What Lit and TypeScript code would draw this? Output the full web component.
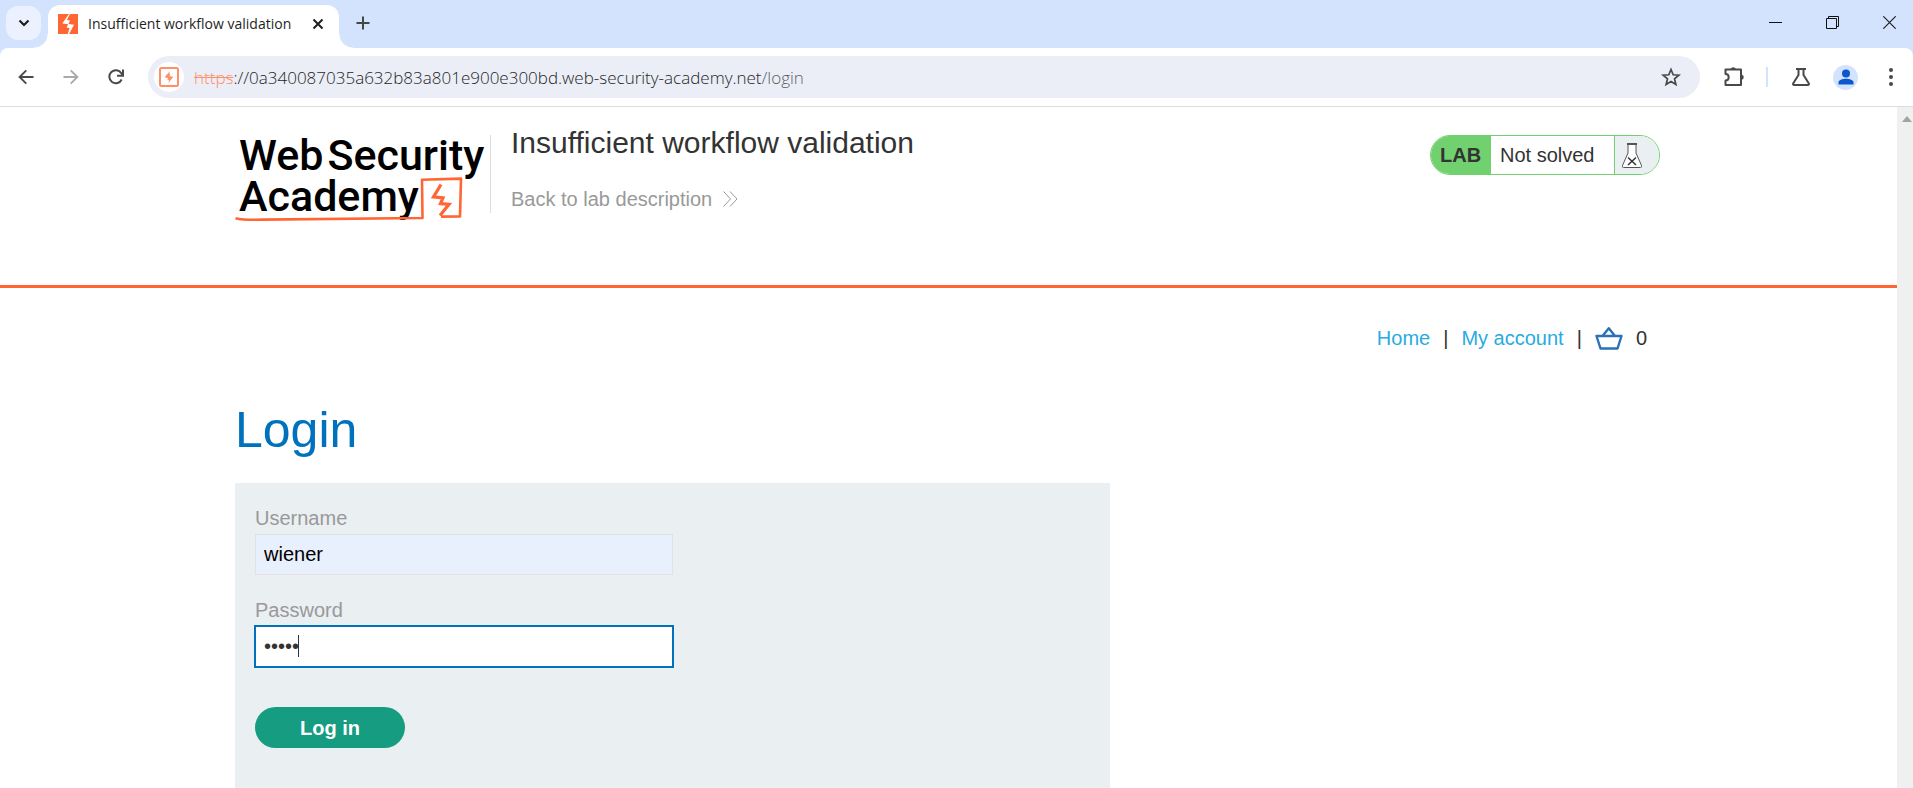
import { LitElement, html, css, svg } from "lit";
import { customElement, state } from "lit/decorators.js";

const icon = (w: number, h: number, body: unknown) =>
  html`<svg width=${w} height=${h} viewBox="0 0 ${w} ${h}" fill="none" aria-hidden="true">${body}</svg>`;

@customElement("browser-chrome")
class BrowserChrome extends LitElement {
  static styles = css`
    :host { display: block; font-family: "Open Sans", "Noto Sans", sans-serif; color: #1f1f1f; }
    svg { display: block; }
    button { border: 0; padding: 0; background: none; display: grid; place-items: center; color: inherit; font: inherit; }
    .strip { display: flex; height: 48px; background: #d3e2fd; align-items: flex-start; }
    .search { width: 35px; height: 34px; margin: 6px 7px 0 6px; border-radius: 12px; background: #ebf1fe; }
    .tab { position: relative; display: flex; align-items: center; gap: 10px; box-sizing: border-box; width: 291px; height: 43px; margin-top: 5px; padding: 0 13px 6px 10px; background: #fff; border-radius: 12px 12px 0 0; }
    .tab::before, .tab::after { content: ""; position: absolute; bottom: 0; width: 14px; height: 14px; }
    .tab::before { left: -14px; background: radial-gradient(circle at 0 0, transparent 13px, #fff 14px); }
    .tab::after { right: -14px; background: radial-gradient(circle at 100% 0, transparent 13px, #fff 14px); }
    .title { flex: 1; font-size: 14px; line-height: 20px; white-space: nowrap; }
    .close { width: 16px; height: 20px; }
    .new { width: 35px; height: 36px; margin: 5px 0 0 6px; }
    .window { display: flex; gap: 10px; margin-left: auto; }
    .window button { width: 47px; height: 45px; }
    .bar { display: flex; align-items: center; height: 58px; background: #fff; border-bottom: 1px solid #dcdde0; border-radius: 8px 8px 0 0; box-sizing: content-box; }
    .barwrap { background: #d3e2fd; }
    .nav { display: flex; padding: 0 8px 0 3px; }
    .nav button { width: 45px; height: 40px; }
    .omni { flex: 1; display: flex; align-items: center; height: 42px; margin-left: 2px; border-radius: 21px; background: #ebeef7; padding: 0 19px 0 6px; }
    .site { width: 30px; height: 30px; border-radius: 50%; background: #fff; }
    .url { flex: 1; margin-left: 10px; padding-top: 1px; font-size: 17px; font-weight: 300; line-height: 24px; white-space: nowrap; }
    .scheme { color: #ff8f66; text-decoration: line-through; }
    .path { color: #5a5d66; }
    .tools { display: flex; align-items: center; width: 213px; }
    .tools button { width: 45px; height: 40px; }
    .tools .first { margin: 0 10px 0 11px; }
    .rule { width: 2px; height: 20px; background: #d3e2fd; margin-right: 10px; }
    .avatar { width: 25px; height: 25px; border-radius: 50%; background: #d3e2fd; display: grid; place-items: center; }
  `;

  render() {
    return html`
      <div class="strip">
        <button class="search" aria-label="Search tabs">${icon(12, 8, svg`<path d="M1.5 1.5 6 6l4.500-4.500" stroke="#1f1f1f" stroke-width="2.200"/>`)}</button>
        <div class="tab">
          ${icon(20, 20, svg`<path fill="#ff6633" d="M0 0h20v20H0z"/><path fill="#fff" d="M11 0 4.200 9.400l6 .8L8.600 13.600l3 .4-1.800 6h1.300L16 10.800l-5.500-.8 1.500-3.400-3.200-.5L12 0z"/>`)}
          <span class="title">Insufficient workflow validation</span>
          <button class="close" aria-label="Close tab">${icon(12, 12, svg`<path d="m1.500 1.500 9 9m0-9-9 9" stroke="#1f1f1f" stroke-width="2"/>`)}</button>
        </div>
        <button class="new" aria-label="New tab">${icon(14, 14, svg`<path d="M7 .5v13M.5 7h13" stroke="#444746" stroke-width="2"/>`)}</button>
        <div class="window">
          <button aria-label="Minimize">${icon(13, 13, svg`<path d="M0 6.500h13" stroke="#111"/>`)}</button>
          <button aria-label="Restore">${icon(13, 13, svg`<path d="M.5 2.500h10v10H.5zM2.500 2.500v-2h10v10h-2" stroke="#111"/>`)}</button>
          <button aria-label="Close">${icon(13, 13, svg`<path d="m.3.3 12.400 12.400m0-12.400L.3 12.700" stroke="#222" stroke-width="1.200"/>`)}</button>
        </div>
      </div>
      <div class="barwrap">
      <div class="bar">
        <div class="nav">
          <button aria-label="Back">${icon(16, 16, svg`<path d="M15.500 8H2M8.300 1.300 1.600 8l6.700 6.700" stroke="#47494b" stroke-width="1.900"/>`)}</button>
          <button aria-label="Forward">${icon(16, 16, svg`<path d="M.5 8H14M7.700 1.300 14.400 8l-6.700 6.700" stroke="#aaa" stroke-width="1.900"/>`)}</button>
          <button aria-label="Reload">${icon(16, 16, svg`<path d="M13.700 10.500A6.500 6.500 0 1 1 13.300 4.200L14.600 6" stroke="#47494b" stroke-width="2"/><path d="M15 .5v6.200H9" stroke="#47494b" stroke-width="2"/>`)}</button>
        </div>
        <div class="omni">
          <button class="site" aria-label="Site information">${icon(20, 20, svg`<rect x="1" y="1" width="18" height="18" rx="1.500" stroke="#ff8f66" stroke-width="2"/><path fill="#ff8f66" d="m11 4-5.500 6.300 3.700.6L8.200 12.600l1.800.4-.6 3 5-6.200-3.900-.5 1-1.800-1.300-.4z"/>`)}</button>
          <span class="url"><span class="scheme">https</span>://0a340087035a632b83a801e900e300bd.web-security-academy.net<span class="path">/login</span></span>
          <button aria-label="Bookmark this page">${icon(20, 20, svg`<path d="m10 2.500 2.200 5.300 5.700.4-4.400 3.700 1.400 5.600-4.900-3-4.900 3 1.400-5.600-4.400-3.700 5.700-.4z" stroke="#47494b" stroke-width="1.700"/>`)}</button>
        </div>
        <div class="tools">
          <button class="first" aria-label="Extensions">${icon(22, 24, svg`<path d="M2.500 4.500h15.500v15.500H2.500v-4.500c2 0 3.200-1.400 3.200-3.200S4.500 9 2.500 9z" stroke="#47494b" stroke-width="2" stroke-linejoin="round"/><path d="M7.500 4a3 3 0 0 1 5.500 0zM18.500 9.500a2.800 2.800 0 0 1 0 5.500z" fill="#47494b"/>`)}</button>
          <span class="rule"></span>
          <button aria-label="Labs">${icon(18, 18, svg`<path d="M4 1h10M6.500 1v6L1.300 15.200q-.8 1.800 1 1.800h13.400q1.800 0 1-1.800L11.500 7V1" stroke="#47494b" stroke-width="2"/>`)}</button>
          <button aria-label="Profile"><span class="avatar">${icon(16, 16, svg`<circle cx="8" cy="4.500" r="4" fill="#0b57d0"/><path d="M.5 15.500v-2C.5 11 4.500 9.800 8 9.800s7.500 1.200 7.500 3.700v2z" fill="#0b57d0"/>`)}</span></button>
          <button aria-label="Menu">${icon(4, 18, svg`<g fill="#47494b"><circle cx="2" cy="2" r="2"/><circle cx="2" cy="9" r="2"/><circle cx="2" cy="16" r="2"/></g>`)}</button>
        </div>
      </div>
      </div>
    `;
  }
}

@customElement("login-form")
class LoginForm extends LitElement {
  @state() private password = "peter";

  static styles = css`
    :host { display: block; }
    h1 { margin: 0; font-size: 50px; line-height: 58px; font-weight: 400; color: #0071bd; }
    form { box-sizing: border-box; width: 875px; max-width: 100%; margin-top: 24px; padding: 24px 20px 40px; background: #eaeff2; }
    label { display: block; color: #999; line-height: 23px; margin-bottom: 4px; }
    .field { position: relative; width: 418px; max-width: 100%; margin-bottom: 24px; }
    .field.last { margin-bottom: 40px; }
    input { display: block; box-sizing: border-box; width: 100%; height: 41px; padding: 0 8px; border: 1px solid #e2e2e2; border-radius: 0; background: #fff; color: #333; font: inherit; caret-color: transparent; }
    input.filled { background: #e8f0fe; color: #000; }
    input.current, input:focus { outline: 2px solid #0071bd; outline-offset: -1px; border-color: #0071bd; }
    .caret { position: absolute; left: 43px; bottom: 10px; width: 1px; height: 22px; background: #333; }
    button { display: block; width: 150px; height: 41px; padding: 0; border: 0; border-radius: 21px; background: #169c80; color: #fff; font: inherit; line-height: 38px; font-weight: 700; }
  `;

  render() {
    return html`
      <h1>Login</h1>
      <form @submit=${(e: Event) => e.preventDefault()}>
        <div class="field">
          <label for="username">Username</label>
          <input id="username" class="filled" type="text" name="username" .value=${"wiener"} />
        </div>
        <div class="field last">
          <label for="password">Password</label>
          <input id="password" class="current" type="password" name="password" .value=${this.password}
            @input=${(e: Event) => (this.password = (e.target as HTMLInputElement).value)} />
          <span class="caret"></span>
        </div>
        <button type="submit">Log in</button>
      </form>
    `;
  }
}

@customElement("app-root")
class AppRoot extends LitElement {
  static styles = css`
    :host { display: flex; flex-direction: column; height: 100vh; overflow: hidden; background: #fff; color: #333; font: 20px/24px "Liberation Sans", Arial, sans-serif; }
    svg { display: block; }
    a { color: #29abe2; text-decoration: none; }
    .view { flex: 1; min-height: 0; display: flex; }
    .page { flex: 1; min-width: 0; overflow: hidden; }
    .scroll { width: 16px; background: #f0f0f0; display: flex; justify-content: flex-end; padding: 9px 1px 0 0; box-sizing: border-box; }
    .wrap { max-width: 1427px; margin: 0 auto; }
    header { border-bottom: 3px solid #ff6633; }
    .head { display: flex; align-items: flex-start; box-sizing: border-box; height: 178px; padding-top: 28px; }
    .logo { position: relative; width: 255px; height: 78px; border-right: 1px solid #ddd; color: #000; font: 500 43px/41px Roboto, sans-serif; }
    .brand { display: flex; flex-direction: column; padding-left: 4px; }
    .row { display: flex; gap: 4px; white-space: nowrap; }
    .mark { position: absolute; left: 0; top: 0; }
    .intro { flex: 1; padding-left: 20px; }
    h2 { margin: -9px 0 27px; font-size: 30px; line-height: 34px; font-weight: 400; }
    .back { display: inline-flex; align-items: center; gap: 11px; color: #999; }
    .status { display: flex; box-sizing: border-box; height: 40px; width: 230px; margin-right: 2px; border: 1px solid #71d16e; border-radius: 20px; overflow: hidden; line-height: 38px; }
    .status strong { width: 60px; box-sizing: border-box; padding-left: 9px; background: #71d16e; }
    .status span { flex: 1; padding-left: 9px; }
    .flask { width: 45px; box-sizing: border-box; padding: 7px 0 0 6px; border-left: 1px solid #71d16e; background: #eaeff2; }
    nav { display: flex; justify-content: flex-end; align-items: center; gap: 13px; padding: 38px 15px 0 0; }
    login-form { margin-top: 51px; }
  `;

  render() {
    return html`
      <browser-chrome></browser-chrome>
      <div class="view">
        <main class="page">
          <header>
            <div class="wrap head">
              <div class="logo">
                <div class="brand">
                  <div class="row"><span>Web</span><span>Security</span></div>
                  <div class="row"><span>Academy</span></div>
                </div>
                <svg class="mark" width="255" height="90" viewBox="0 0 255 90" fill="none" aria-hidden="true">
                  <path d="M.5 83.200C8 85 15 85 28 84.600c50-.6 100-.6 159.500-1.600L187 44.800l39-1.200-1 37.800-19 .2" stroke="#ff6633" stroke-width="2.600" stroke-linejoin="round"/>
                  <path d="m206 49.500-7.500 12.300 9.500 1-2.500 5.700 8.500.8-9 11.200" stroke="#ff6633" stroke-width="3.200"/>
                </svg>
              </div>
              <div class="intro">
                <h2>Insufficient workflow validation</h2>
                <a class="back" href="#lab">Back to lab description
                  ${icon(15, 16, svg`<path d="m.5.5 7 7.500-7 7.500M7 .5 14 8l-7 7.500" stroke="#999"/>`)}</a>
              </div>
              <div class="status">
                <strong>LAB</strong><span>Not solved</span>
                <div class="flask">${icon(22, 26, svg`<path d="M7 2v8L1.500 22.500q-.6 2 1 2h17q1.600 0 1-2L15 10V2" fill="#fff" stroke="#555"/><path d="M6 1h10" stroke="#555" stroke-width="2"/><path d="m7 14.500 8 7.500m0-7.500L7 22" stroke="#333" stroke-width="1.500"/>`)}</div>
              </div>
            </div>
          </header>
          <div class="wrap">
            <nav>
              <a href="#home">Home</a><span>|</span><a href="#account">My account</a><span>|</span>
              <a href="#cart" aria-label="Basket">${icon(28, 24, svg`<path d="M1.500 10h25l-4 12.500h-17zM7.500 10 13.800 2.200 20 10" stroke="#2a72b8" stroke-width="2.400" stroke-linejoin="round"/>`)}</a>
              <span>0</span>
            </nav>
            <login-form></login-form>
          </div>
        </main>
        <div class="scroll">${icon(10, 6, svg`<path d="M5 0 10 6H0z" fill="#a3a3a3"/>`)}</div>
      </div>
    `;
  }
}
